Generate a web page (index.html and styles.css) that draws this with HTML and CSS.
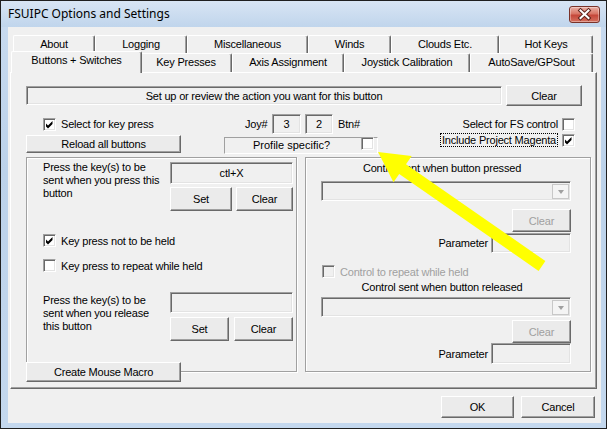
FILE: index.html
```
<!DOCTYPE html>
<html>
<head>
<meta charset="utf-8">
<title>FSUIPC Options and Settings</title>
<link rel="stylesheet" href="styles.css">
</head>
<body>
<div class="window">
  <div class="titlebar">
    <span class="title">FSUIPC Options and Settings</span>
    <div class="close">
      <svg width="29" height="15" viewBox="0 0 29 15">
        <path d="M10.5 3.5 L18.5 11 M18.5 3.5 L10.5 11" stroke="#5a2018" stroke-width="4" stroke-linecap="square" fill="none"/>
        <path d="M10.5 3.5 L18.5 11 M18.5 3.5 L10.5 11" stroke="#ffffff" stroke-width="2" stroke-linecap="square" fill="none"/>
      </svg>
    </div>
  </div>
  <div class="client">
    <div class="tabrow back">
      <div class="tab t-about">About</div>
      <div class="tab t-logging">Logging</div>
      <div class="tab t-misc">Miscellaneous</div>
      <div class="tab t-winds">Winds</div>
      <div class="tab t-clouds">Clouds Etc.</div>
      <div class="tab t-hotkeys">Hot Keys</div>
    </div>
    <div class="tabrow front">
      <div class="tab sel t-buttons">Buttons + Switches</div>
      <div class="tab t-keys">Key Presses</div>
      <div class="tab t-axis">Axis Assignment</div>
      <div class="tab t-joy">Joystick Calibration</div>
      <div class="tab t-auto">AutoSave/GPSout</div>
    </div>
    <div class="panel">
      <div class="row r1">
        <div class="field status">Set up or review the action you want for this button</div>
        <div class="btn clear-top">Clear</div>
      </div>
      <div class="row r2">
        <span class="cb on"><svg width="9" height="9" viewBox="0 0 9 9"><polygon points="1,3.5 3,5.5 7.5,1 7.5,4 3,8.5 1,6.5" fill="#000"/></svg></span>
        <span class="lbl keypress">Select for key press</span>
        <span class="lbl joy">Joy#</span>
        <div class="field num n3">3</div>
        <div class="field num n2">2</div>
        <span class="lbl btnno">Btn#</span>
        <span class="spacer"></span>
        <span class="lbl">Select for FS control</span>
        <span class="cb gap4"></span>
      </div>
      <div class="row r3">
        <div class="btn reload">Reload all buttons</div>
        <div class="profile">
          <span class="ptext">Profile specific?</span>
          <span class="cb pcb"></span>
        </div>
        <span class="spacer"></span>
        <span class="focus">Include Project Magenta</span>
        <span class="cb gap4"><svg width="9" height="9" viewBox="0 0 9 9"><polygon points="1,3.5 3,5.5 7.5,1 7.5,4 3,8.5 1,6.5" fill="#000"/></svg></span>
      </div>
      <div class="groups">
        <div class="leftcol">
          <div class="group gl">
            <div class="keyblock kb1">
              <div class="ktext">Press the key(s) to be<br>sent when you press this<br>button</div>
              <div class="kctrl">
                <div class="field kfield">ctl+X</div>
                <div class="kbtns">
                  <div class="btn set1">Set</div>
                  <div class="btn clr1">Clear</div>
                </div>
              </div>
            </div>
            <div class="checkrow c1">
              <span class="cb on"><svg width="9" height="9" viewBox="0 0 9 9"><polygon points="1,3.5 3,5.5 7.5,1 7.5,4 3,8.5 1,6.5" fill="#000"/></svg></span>
              <span class="lbl">Key press not to be held</span>
            </div>
            <div class="checkrow c2">
              <span class="cb"></span>
              <span class="lbl">Key press to repeat while held</span>
            </div>
            <div class="keyblock kb2">
              <div class="ktext">Press the key(s) to be<br>sent when you release<br>this button</div>
              <div class="kctrl">
                <div class="field kfield2"></div>
                <div class="kbtns kbtns2">
                  <div class="btn set2">Set</div>
                  <div class="btn clr2">Clear</div>
                </div>
              </div>
            </div>
          </div>
          <div class="btn macro">Create Mouse Macro</div>
        </div>
        <div class="group gr">
          <div class="gtitle t1">Control sent when button pressed</div>
          <div class="combo cb1"><span class="drop"><span class="tri"></span></span></div>
          <div class="btn dis dclear d1">Clear</div>
          <div class="param p1"><span class="lbl">Parameter</span><div class="field pfield"></div></div>
          <div class="checkrow c3">
            <span class="cb dcb"></span>
            <span class="lbl grey">Control to repeat while held</span>
          </div>
          <div class="gtitle t2">Control sent when button released</div>
          <div class="combo cb2"><span class="drop"><span class="tri"></span></span></div>
          <div class="btn dis dclear d2">Clear</div>
          <div class="param p2"><span class="lbl">Parameter</span><div class="field pfield pf2"></div></div>
        </div>
      </div>
    </div>
    <div class="footer">
      <div class="btn ok">OK</div>
      <div class="btn cancel">Cancel</div>
    </div>
  </div>
  <svg class="arrow" width="607" height="429" viewBox="0 0 607 429">
    <polygon points="378,152 411.7,156 406,164.2 545.4,261.1 538.6,270.9 399.2,174 393.5,182.2" fill="#ffff00"/>
  </svg>
</div>
</body>
</html>
```

FILE: styles.css
```
* { box-sizing: border-box; }

body {
  margin: 0;
  background: #ffffff;
  font-family: "Liberation Sans", Arial, sans-serif;
  font-size: 11px;
  letter-spacing: -0.2px;
  color: #000;
}

.window {
  position: relative;
  width: 607px;
  height: 429px;
  border: 1px solid #1f1f1f;
  background: linear-gradient(#c9dbf0, #bcd2ea 40%, #c4d8ee);
  display: flex;
  flex-direction: column;
  overflow: hidden;
}

.titlebar {
  height: 26px;
  flex: none;
  display: flex;
  align-items: center;
  padding-left: 7px;
  background: linear-gradient(#d8e5f4, #c0d5ec);
}

.title {
  font-family: "Noto Sans", "DejaVu Sans", sans-serif;
  font-size: 12px;
  letter-spacing: 0;
  margin-top: -1px;
}

.close {
  margin-left: auto;
  margin-right: 6px;
  align-self: flex-start;
  margin-top: 5px;
  width: 31px;
  height: 17px;
  border: 1px solid #7a3329;
  border-radius: 3px;
  background: linear-gradient(#eab0a5, #d87565 45%, #c5473a 55%, #d4705e);
  box-shadow: inset 0 0 0 1px rgba(255,255,255,0.35);
  display: flex;
}

.client {
  flex: 1;
  margin: 0 5px 5px 7px;
  background: #f0f0f0;
  display: flex;
  flex-direction: column;
}

/* tabs */
.tabrow {
  display: flex;
  padding-left: 5px;
  flex: none;
}
.tabrow.back { margin-top: 8px; height: 18px; }
.tabrow.front { height: 19px; }

.tab {
  height: 100%;
  border-top: 1px solid #ffffff;
  border-left: 1px solid #ffffff;
  border-right: 1px solid #696969;
  box-shadow: inset -1px 0 0 #a0a0a0;
  border-radius: 2px 2px 0 0;
  background: #f0f0f0;
  text-align: center;
  line-height: 16px;
  white-space: nowrap;
}
.tabrow.front .tab { line-height: 17px; }

.t-about { width: 82px; }
.t-logging { width: 92px; }
.t-misc { width: 121px; }
.t-winds { width: 83px; }
.t-clouds { width: 108px; }
.t-hotkeys { width: 94px; }

.t-buttons { width: 127px; }
.t-keys { width: 92px; }
.t-axis { width: 112px; }
.t-joy { width: 126px; }
.t-auto { width: 123px; }

.tab.sel {
  position: relative;
  z-index: 3;
  width: 131px;
  height: 22px;
  margin: -2px -2px 0 -2px;
  line-height: 18px;
}

/* panel */
.panel {
  position: relative;
  z-index: 1;
  margin-left: 2px;
  width: 587px;
  height: 317px;
  flex: none;
  border-top: 1px solid #ffffff;
  border-left: 1px solid #ffffff;
  border-right: 1px solid #696969;
  border-bottom: 1px solid #696969;
  box-shadow: inset -1px -1px 0 #a0a0a0;
  display: flex;
  flex-direction: column;
}

.row {
  display: flex;
  padding-left: 15px;
  padding-right: 21px;
  flex: none;
}
.r1 { margin-top: 12px; height: 21px; align-items: center; }
.r2 { margin-top: 8px; height: 20px; align-items: center; }
.r3 { height: 20px; align-items: flex-start; }

.spacer { flex: 1; }

/* controls */
.btn {
  display: flex;
  align-items: center;
  justify-content: center;
  background: #ebebeb;
  border-top: 1px solid #ffffff;
  border-left: 1px solid #ffffff;
  border-right: 1px solid #696969;
  border-bottom: 1px solid #696969;
  box-shadow: inset -1px -1px 0 #a0a0a0;
  white-space: nowrap;
  flex: none;
}
.btn.dis { color: #a0a0a0; }

.field {
  display: flex;
  align-items: center;
  justify-content: center;
  background: #f0f0f0;
  border-top: 1px solid #a0a0a0;
  border-left: 1px solid #a0a0a0;
  border-right: 1px solid #ffffff;
  border-bottom: 1px solid #ffffff;
  box-shadow: inset 1px 1px 0 #696969, inset -1px -1px 0 #e3e3e3;
  white-space: nowrap;
  flex: none;
}

.cb {
  width: 13px;
  height: 13px;
  flex: none;
  background: #ffffff;
  border-top: 1px solid #a0a0a0;
  border-left: 1px solid #a0a0a0;
  border-right: 1px solid #ffffff;
  border-bottom: 1px solid #ffffff;
  box-shadow: inset 1px 1px 0 #696969, inset -1px -1px 0 #e3e3e3;
  padding: 1px 0 0 1px;
  display: flex;
}
.cb svg { display: block; }

.lbl { white-space: nowrap; }
.grey { color: #a0a0a0; }

/* row 1 */
.status { width: 476px; height: 19px; }
.clear-top { width: 76px; height: 21px; margin-left: 4px; }

/* row 2 */
.r2 .cb:first-child { margin-left: 17px; }
.keypress { width: 184px; margin-left: 5px; }
.joy { width: 27px; }
.num { height: 20px; }
.n3 { width: 29px; }
.n2 { width: 28px; margin-left: 4px; }
.btnno { margin-left: 5px; }
.gap4 { margin-left: 4px; }

/* row 3 */
.reload { width: 155px; height: 18px; margin-top: 1px; }
.profile {
  margin-left: 43px;
  margin-top: 3px;
  width: 154px;
  height: 17px;
  display: flex;
  align-items: flex-start;
  border-top: 1px solid #a0a0a0;
  border-left: 1px solid #a0a0a0;
  border-right: 1px solid #ffffff;
  border-bottom: 1px solid #ffffff;
}
.ptext { margin-left: 28px; line-height: 14px; letter-spacing: 0; }
.pcb { margin-left: auto; margin-right: 3px; margin-top: -1px; }
.focus {
  border: 1px dotted #000;
  height: 14px;
  line-height: 12px;
  margin-top: -1px;
  padding: 0 1px;
}
.r3 .gap4 { margin-top: 0; }

/* groups */
.groups {
  display: flex;
  gap: 8px;
  margin-top: 3px;
  padding-left: 15px;
}
.leftcol {
  width: 271px;
  display: flex;
  flex-direction: column;
}
.group {
  border: 1px solid #a0a0a0;
  box-shadow: inset 1px 1px 0 #ffffff, 1px 1px 0 #ffffff;
  display: flex;
  flex-direction: column;
}
.gl {
  height: 215px;
  padding: 3px 3px 0 16px;
}
.macro {
  width: 155px;
  height: 20px;
  margin-top: -10px;
}

.keyblock { display: flex; }
.ktext { width: 127px; line-height: 13px; }
.kb2 { margin-top: 20px; }
.kb2 .ktext { padding-top: 2px; }
.kctrl { display: flex; flex-direction: column; }
.kfield { width: 123px; height: 22px; margin-top: 1px; }
.kfield2 { width: 123px; height: 21px; }
.kbtns { display: flex; margin-top: 3px; gap: 4px; }
.kbtns2 { margin-top: 4px; gap: 5px; }
.set1 { width: 62px; height: 24px; }
.clr1 { width: 57px; height: 24px; }
.set2 { width: 59px; height: 24px; }
.clr2 { width: 59px; height: 24px; }

.checkrow {
  display: flex;
  align-items: center;
  height: 13px;
}
.checkrow .lbl { margin-left: 5px; }
.c1 { margin-top: 23px; }
.c2 { margin-top: 12px; }

.gr {
  width: 286px;
  height: 215px;
  padding: 0 19px 0 15px;
}
.gtitle {
  text-align: center;
  line-height: 13px;
  padding-right: 8px;
}
.t1 { margin-top: 4px; }
.t2 { margin-top: 3px; }

.combo {
  height: 20px;
  width: 250px;
  background: #f0f0f0;
  border-top: 1px solid #a0a0a0;
  border-left: 1px solid #a0a0a0;
  border-right: 1px solid #ffffff;
  border-bottom: 1px solid #ffffff;
  box-shadow: inset 1px 1px 0 #696969, inset -1px -1px 0 #e3e3e3;
  display: flex;
  justify-content: flex-end;
  padding: 2px 1px 1px 2px;
  flex: none;
}
.cb1 { margin-top: 6px; }
.cb2 { margin-top: 3px; }
.drop {
  width: 17px;
  height: 100%;
  background: #f4f4f4;
  border: 1px solid #c8c8c8;
  display: flex;
  align-items: center;
  justify-content: center;
}
.tri {
  width: 0;
  height: 0;
  border-left: 3.5px solid transparent;
  border-right: 3.5px solid transparent;
  border-top: 4px solid #a0a0a0;
}

.dclear {
  width: 59px;
  height: 23px;
  align-self: flex-end;
}
.d1 { margin-top: 8px; }
.d2 { margin-top: 3px; }

.param {
  display: flex;
  justify-content: flex-end;
  align-items: center;
  height: 20px;
}
.param .lbl { margin-right: 3px; }
.p1 { margin-top: 1px; }
.p2 { height: 21px; }
.pfield { width: 80px; height: 20px; }
.pf2 { height: 21px; }

.c3 { margin-top: 12px; padding-left: 1px; }
.dcb { background: #f0f0f0; }

/* footer */
.footer {
  display: flex;
  justify-content: flex-end;
  gap: 7px;
  padding-right: 6px;
  margin-top: 7px;
}
.ok { width: 73px; height: 22px; }
.cancel { width: 74px; height: 22px; }

/* annotation arrow */
.arrow {
  position: absolute;
  left: -1px;
  top: -1px;
  z-index: 10;
  pointer-events: none;
}
```
